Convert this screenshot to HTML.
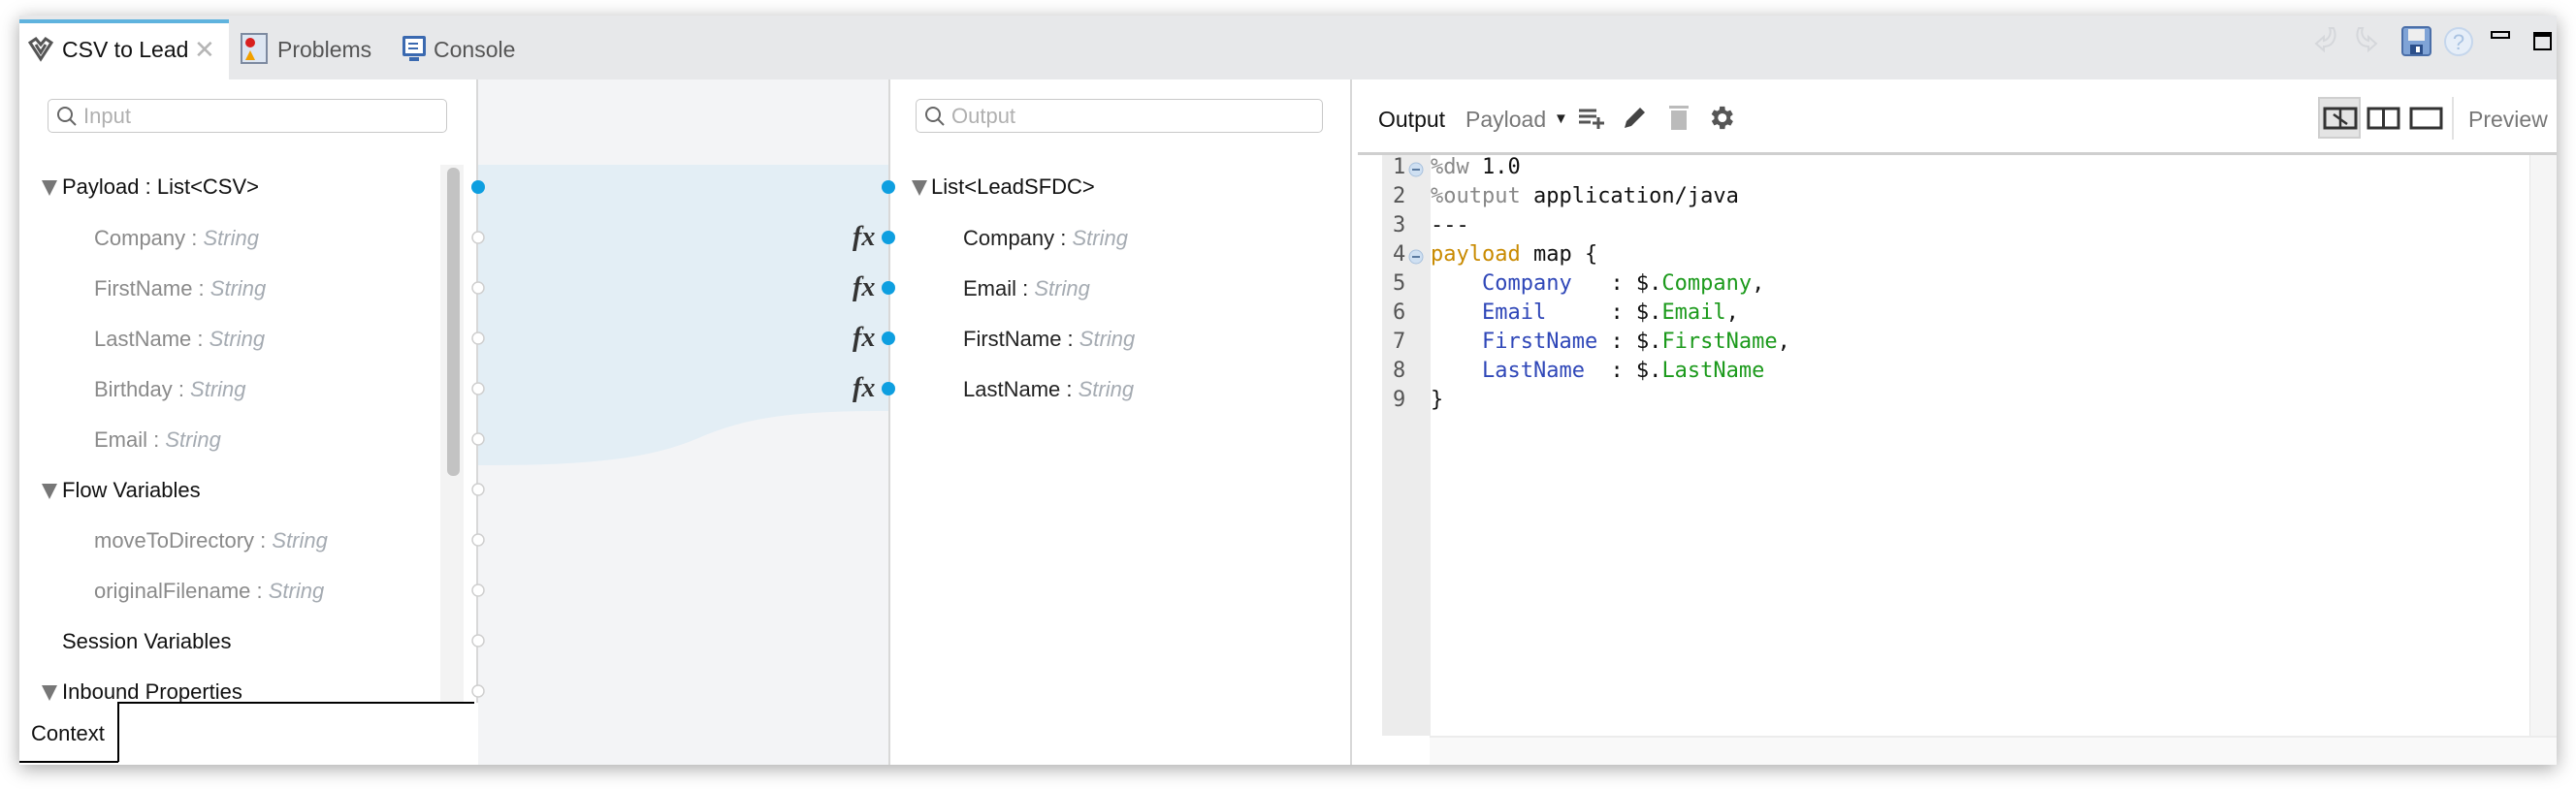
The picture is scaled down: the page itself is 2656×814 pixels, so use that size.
<!DOCTYPE html>
<html><head><meta charset="utf-8"><style>
*{margin:0;padding:0;box-sizing:border-box}
body{width:2656px;height:814px;background:#fff;position:relative;overflow:hidden;font-family:"Liberation Sans",sans-serif}
.abs{position:absolute}
#win{position:absolute;left:20px;top:16px;width:2616px;height:773px;background:#fff;box-shadow:0 4px 18px rgba(0,0,0,.35)}
.t{position:absolute;font-size:22px;white-space:nowrap;line-height:1}
.g{color:#8a8a8a}.s{color:#a5abb2;font-style:italic}
.tri{position:absolute;width:0;height:0;border-left:8px solid transparent;border-right:8px solid transparent;border-top:16px solid #777}
.code{position:absolute;font-family:"DejaVu Sans Mono","Liberation Mono",monospace;font-size:22px;white-space:pre;line-height:30px}
</style></head><body>
<div id="win"></div>
<!-- tab bar -->
<div class="abs" style="left:20px;top:16px;width:2616px;height:66px;background:#e7e8ea"></div>
<div class="abs" style="left:20px;top:20px;width:216px;height:62px;background:#fff;border-top:4px solid #5fb3de"></div>
<svg class="abs" style="left:28px;top:38px" width="28" height="26" viewBox="0 0 28 26"><path d="M3 6 L9 2 L14 8 L19 2 L25 6 L14 23 Z M9 8 L14 16 L19 8" fill="none" stroke="#555" stroke-width="3"/></svg>
<div class="t" style="left:64px;top:40px;font-size:23px;color:#111">CSV to Lead</div>
<div class="t" style="left:200px;top:38px;font-size:26px;color:#b5b5b5">✕</div>
<svg class="abs" style="left:248px;top:34px" width="30" height="32"><rect x="1" y="1" width="26" height="30" fill="#dde6f2" stroke="#7d8aa0" stroke-width="2"/><circle cx="10" cy="10" r="5" fill="#d82020"/><path d="M5 28 L10 18 L15 28Z" fill="#f0a000"/></svg>
<div class="t" style="left:286px;top:40px;font-size:23px;color:#555">Problems</div>
<svg class="abs" style="left:414px;top:36px" width="26" height="30"><rect x="1" y="1" width="24" height="21" rx="2" fill="#3a69b0"/><rect x="4" y="4" width="18" height="15" fill="#fff"/><rect x="7" y="8" width="10" height="2" fill="#3a69b0"/><rect x="7" y="13" width="10" height="2" fill="#3a69b0"/><rect x="8" y="23" width="10" height="4" fill="#3a69b0"/></svg>
<div class="t" style="left:447px;top:40px;font-size:23px;color:#555">Console</div>
<!-- top right icons -->
<svg class="abs" style="left:2386px;top:26px" width="80" height="32"><path d="M16 3 C18 8 16 14 10 16 L10 12 L2 19 L10 26 L10 22 C20 22 24 12 20 3 Z" fill="none" stroke="#d5d7db" stroke-width="2"/><path d="M50 3 C48 8 50 14 56 16 L56 12 L64 19 L56 26 L56 22 C46 22 42 12 46 3 Z" fill="none" stroke="#d5d7db" stroke-width="2"/></svg>
<svg class="abs" style="left:2476px;top:27px" width="32" height="32"><rect x="1" y="1" width="29" height="29" rx="3" fill="#7fa3d6" stroke="#4a6ea8" stroke-width="2"/><rect x="7" y="3" width="17" height="12" fill="#eee"/><rect x="9" y="19" width="13" height="10" fill="#2c4f8a"/><rect x="15" y="21" width="4" height="6" fill="#fff"/></svg>
<svg class="abs" style="left:2519px;top:27px" width="32" height="32"><circle cx="16" cy="16" r="14" fill="#e6eef8" stroke="#c5d6ec" stroke-width="2"/><text x="16" y="24" font-size="22" text-anchor="middle" fill="#a8c2e2" font-family="Liberation Sans">?</text></svg>
<div class="abs" style="left:2568px;top:32px;width:20px;height:8px;border:2px solid #000"></div>
<div class="abs" style="left:2612px;top:33px;width:19px;height:19px;border:2px solid #000;border-top-width:5px"></div>

<!-- left panel -->
<div class="abs" style="left:49px;top:102px;width:412px;height:35px;border:1px solid #c8c8c8;border-radius:5px;background:#fff"></div>
<svg class="abs" style="left:57px;top:108px" width="24" height="24"><circle cx="10" cy="10" r="7" fill="none" stroke="#666" stroke-width="2"/><path d="M15 15 L21 21" stroke="#666" stroke-width="2"/></svg>
<div class="t" style="left:86px;top:109px;color:#b0b0b0">Input</div>
<div class="abs" style="left:454px;top:170px;width:24px;height:555px;background:#f3f3f3"></div>
<div class="abs" style="left:461px;top:173px;width:13px;height:318px;background:#c3c3c3;border-radius:6px"></div>
<div class="abs" style="left:491px;top:82px;width:2px;height:707px;background:#d8d8d8"></div>

<div class="tri" style="left:43px;top:186px"></div><div class="t" style="left:64px;top:182px;color:#111">Payload : List&lt;CSV&gt;</div>
<div class="t g" style="left:97px;top:235px">Company : <span class="s">String</span></div>
<div class="t g" style="left:97px;top:287px">FirstName : <span class="s">String</span></div>
<div class="t g" style="left:97px;top:339px">LastName : <span class="s">String</span></div>
<div class="t g" style="left:97px;top:391px">Birthday : <span class="s">String</span></div>
<div class="t g" style="left:97px;top:443px">Email : <span class="s">String</span></div>
<div class="tri" style="left:43px;top:499px"></div><div class="t" style="left:64px;top:495px;color:#111">Flow Variables</div>
<div class="t g" style="left:97px;top:547px">moveToDirectory : <span class="s">String</span></div>
<div class="t g" style="left:97px;top:599px">originalFilename : <span class="s">String</span></div>
<div class="t" style="left:64px;top:651px;color:#111">Session Variables</div>
<div class="tri" style="left:43px;top:707px"></div><div class="t" style="left:64px;top:703px;color:#111">Inbound Properties</div>
<!-- context tab -->
<div class="abs" style="left:20px;top:725px;width:473px;height:64px;background:#fff"></div>
<div class="abs" style="left:122px;top:724px;width:367px;height:2px;background:#000"></div>
<div class="abs" style="left:121px;top:724px;width:2px;height:62px;background:#000"></div>
<div class="abs" style="left:20px;top:785px;width:102px;height:2px;background:#000"></div>
<div class="t" style="left:32px;top:746px;color:#111">Context</div>

<!-- mapping area -->
<svg class="abs" style="left:0;top:0" width="2656" height="814">
<rect x="493" y="82" width="423" height="707" fill="#f3f4f6"/>
<path d="M493 170 H916 V424 C820 424 770 430 720 452 C660 478 580 480 493 480 Z" fill="#e3eef5"/>
<rect x="916" y="82" width="2" height="707" fill="#d8d8d8"/>
<rect x="1392" y="82" width="2" height="707" fill="#d8d8d8"/>
<g fill="#fff" stroke="#cfcfcf" stroke-width="1.5">
<circle cx="493" cy="245" r="6"/><circle cx="493" cy="297" r="6"/><circle cx="493" cy="349" r="6"/><circle cx="493" cy="401" r="6"/><circle cx="493" cy="453" r="6"/><circle cx="493" cy="505" r="6"/><circle cx="493" cy="557" r="6"/><circle cx="493" cy="609" r="6"/><circle cx="493" cy="661" r="6"/><circle cx="493" cy="713" r="6"/></g>
<g fill="#0e9fe0"><circle cx="493" cy="193" r="7"/><circle cx="916" cy="193" r="7"/><circle cx="916" cy="245" r="7"/><circle cx="916" cy="297" r="7"/><circle cx="916" cy="349" r="7"/><circle cx="916" cy="401" r="7"/></g>
<g font-family="Liberation Serif" font-style="italic" font-weight="bold" font-size="28" fill="#333">
<text x="879" y="253">fx</text><text x="879" y="305">fx</text><text x="879" y="357">fx</text><text x="879" y="409">fx</text></g>
</svg>

<!-- output panel -->
<div class="abs" style="left:944px;top:102px;width:420px;height:35px;border:1px solid #c8c8c8;border-radius:5px"></div>
<svg class="abs" style="left:952px;top:108px" width="24" height="24"><circle cx="10" cy="10" r="7" fill="none" stroke="#666" stroke-width="2"/><path d="M15 15 L21 21" stroke="#666" stroke-width="2"/></svg>
<div class="t" style="left:981px;top:109px;color:#b0b0b0">Output</div>
<div class="tri" style="left:940px;top:186px"></div><div class="t" style="left:960px;top:182px;color:#111">List&lt;LeadSFDC&gt;</div>
<div class="t" style="left:993px;top:235px;color:#222">Company : <span class="s">String</span></div>
<div class="t" style="left:993px;top:287px;color:#222">Email : <span class="s">String</span></div>
<div class="t" style="left:993px;top:339px;color:#222">FirstName : <span class="s">String</span></div>
<div class="t" style="left:993px;top:391px;color:#222">LastName : <span class="s">String</span></div>

<!-- right panel toolbar -->
<div class="t" style="left:1421px;top:112px;font-size:23px;color:#111">Output</div>
<div class="t" style="left:1511px;top:112px;font-size:23px;color:#777">Payload</div>
<div class="t" style="left:1602px;top:115px;font-size:15px;color:#222">▼</div>
<svg class="abs" style="left:1627px;top:110px" width="30" height="24"><path d="M1 4H19M1 10H19M1 16H13M15 17H27M21 11V23" stroke="#555" stroke-width="3"/></svg>
<svg class="abs" style="left:1672px;top:107px" width="28" height="28"><path d="M3 25 L5 18 L19 4 L24 9 L10 23 Z" fill="#444"/></svg>
<svg class="abs" style="left:1720px;top:107px" width="22" height="28"><rect x="1" y="2" width="20" height="3" fill="#bbb"/><rect x="3" y="7" width="16" height="20" fill="#bbb"/></svg>
<svg class="abs" style="left:1759px;top:106px" width="31" height="31" viewBox="0 0 24 24"><path fill="#555" d="M19.4 13a7.5 7.5 0 000-2l2.1-1.6-2-3.5-2.5 1a7 7 0 00-1.7-1L15 3h-4l-.4 2.7a7 7 0 00-1.7 1l-2.5-1-2 3.5L6.6 11a7.5 7.5 0 000 2l-2.1 1.6 2 3.5 2.5-1a7 7 0 001.7 1L11 21h4l.4-2.7a7 7 0 001.7-1l2.5 1 2-3.5zM13 15.5A3.5 3.5 0 1113 8.5a3.5 3.5 0 010 7z"/></svg>
<div class="abs" style="left:2390px;top:100px;width:44px;height:43px;background:#e4e4e4;border:2px solid #cfcfcf"></div>
<svg class="abs" style="left:2395px;top:108px" width="130" height="28"><rect x="2" y="4" width="32" height="20" fill="none" stroke="#333" stroke-width="3"/><path d="M18 4V24M11 10L25 20" stroke="#333" stroke-width="2.5"/><rect x="47" y="4" width="31" height="20" fill="none" stroke="#333" stroke-width="3"/><path d="M62.5 4V24" stroke="#333" stroke-width="3"/><rect x="91" y="4" width="31" height="20" fill="none" stroke="#333" stroke-width="3"/></svg>
<div class="abs" style="left:2528px;top:100px;width:2px;height:44px;background:#e2e2e2"></div>
<div class="t" style="left:2545px;top:112px;font-size:23px;color:#777">Preview</div>
<div class="abs" style="left:1400px;top:157px;width:1236px;height:3px;background:#cfcfcf"></div>
<!-- code -->
<div class="abs" style="left:1425px;top:160px;width:50px;height:599px;background:#ececec"></div>
<div class="abs" style="left:2608px;top:160px;width:28px;height:599px;background:#f5f5f5;border-left:1px solid #e6e6e6"></div>
<div class="abs" style="left:1474px;top:759px;width:1162px;height:30px;background:#f9f9f9;border-top:2px solid #ececec"></div>
<div class="code" style="left:1436px;top:158px;color:#555">1
2
3
4
5
6
7
8
9</div>
<svg class="abs" style="left:1452px;top:164px" width="20" height="130"><circle cx="8" cy="11" r="7" fill="#cfe0f2" stroke="#a7c0dc"/><rect x="4" y="10" width="8" height="2" fill="#5a7aa0"/><circle cx="8" cy="101" r="7" fill="#cfe0f2" stroke="#a7c0dc"/><rect x="4" y="100" width="8" height="2" fill="#5a7aa0"/></svg>
<div class="code" style="left:1475px;top:158px;color:#111"><span style="color:#888">%dw</span> 1.0
<span style="color:#888">%output</span> application/java
---
<span style="color:#c98a00">payload</span> map {
    <span style="color:#2f47b8">Company</span>   : $.<span style="color:#1c9a1c">Company</span>,
    <span style="color:#2f47b8">Email</span>     : $.<span style="color:#1c9a1c">Email</span>,
    <span style="color:#2f47b8">FirstName</span> : $.<span style="color:#1c9a1c">FirstName</span>,
    <span style="color:#2f47b8">LastName</span>  : $.<span style="color:#1c9a1c">LastName</span>
}</div>
</body></html>
